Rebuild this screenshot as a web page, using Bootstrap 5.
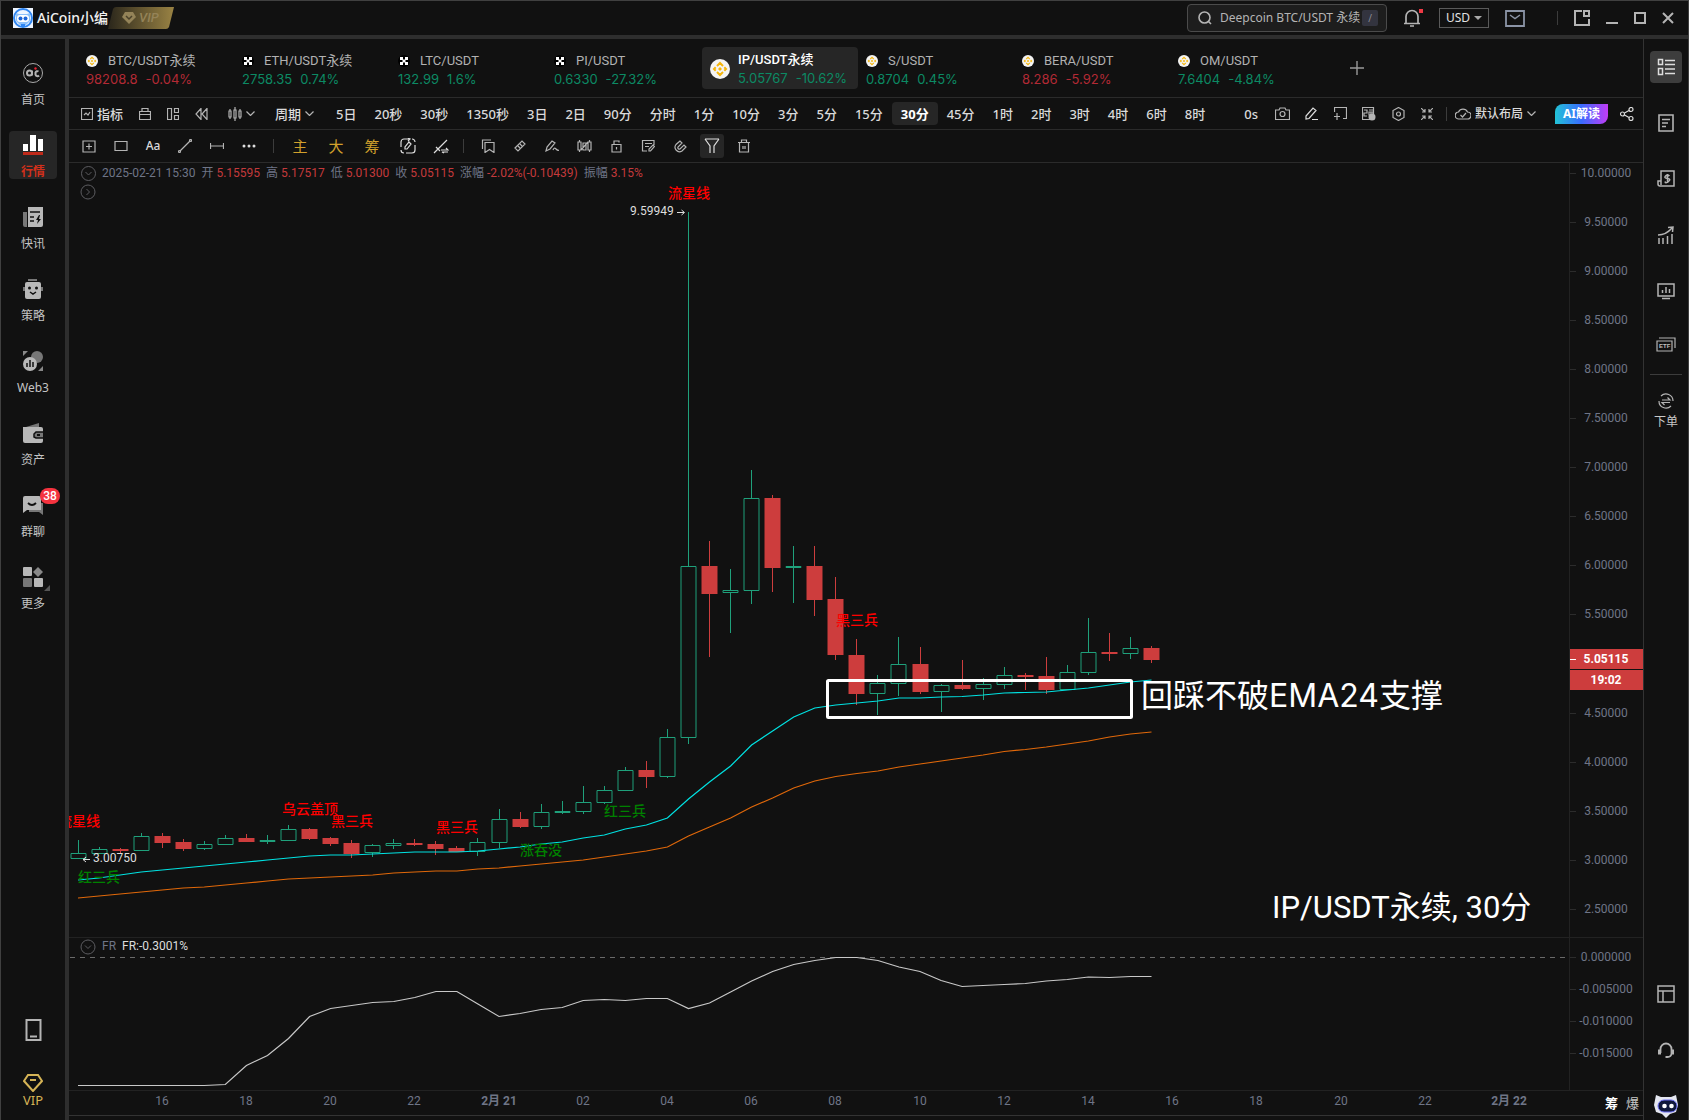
<!DOCTYPE html>
<html lang="zh-CN" data-bs-theme="dark">
<head>
<meta charset="utf-8">
<meta name="viewport" content="width=device-width, initial-scale=1">
<title>AiCoin - IP/USDT永续</title>
<link href="https://cdn.jsdelivr.net/npm/bootstrap@5.3.0/dist/css/bootstrap.min.css" rel="stylesheet">
<style>
:root{--ink:#111;--frame:#2e2e2e;--rule:#2b2b2b;--up:#0c8a64;--down:#b32a35;--muted:#6f7587}
body{background:var(--ink);color:#c8c8c8;font-family:"Noto Sans","Noto Sans CJK SC",sans-serif;font-size:13px;line-height:18px;overflow:hidden}
.app{border:1px solid #404040;border-bottom:0}
button,.plain{background:none;border:0;padding:0;color:inherit;font:inherit;text-decoration:none}
svg{display:block;flex:none}
.ic{fill:none;stroke:#b4b4b4;stroke-width:1.2}
.topbar{height:38px;border-bottom:4px solid var(--frame);padding-left:12px;padding-right:14px}
.brand-name{font-size:14px;font-weight:500;color:#f2f2f2}
.vip-tag{width:66px;height:22px}
.search-box{width:200px;height:28px;background:#1d1d1d;border:1px solid #4b4b4b;border-radius:4px;padding:0 8px 0 10px}
.search-box input{background:none;border:0;outline:0;min-width:0;flex:1;font-size:12px;color:#b4b4b4;padding:0}
.search-box input::placeholder{color:#b4b4b4;opacity:1}
.slash{width:16px;height:16px;background:#33343f;border-radius:2px;font-size:10px;line-height:16px;text-align:center;color:#8a8a92}
.cur{appearance:none;width:50px;height:20px;margin-left:14px;border:1px solid #5a5a5a;background:#111 url("data:image/svg+xml,%3Csvg xmlns='http://www.w3.org/2000/svg' width='8' height='4'%3E%3Cpath d='M0 0h8L4 4z' fill='%23aaa'/%3E%3C/svg%3E") no-repeat right 6px center;color:#e2e2e2;font-size:12px;line-height:16px;padding:0 0 0 6px}
.winsep{margin:0 16px 0 32px}
.leftbar{width:68px;border-right:4px solid var(--frame);padding-top:8px;background:var(--ink)}
.leftbar .side{height:72px;width:64px;font-size:12px;color:#c4c4c4;padding-top:16px;gap:8px;position:relative}
.side.on::before{content:"";position:absolute;inset:12px 8px;background:#262626;border-radius:4px;z-index:-1}
.side.on{color:#d2301b;font-weight:700;z-index:0}
.count{position:absolute;left:39px;top:9px;background:#f5333f;color:#fff;border-radius:8px;font:500 12px/16px Roboto,sans-serif;width:20px;text-align:center}
.corner-tri{position:absolute;left:43px;top:24px}
.vip-link{color:#d6b456;font-size:13px;line-height:16px}
.leftfoot{padding-bottom:12px}
.rightbar{width:45px;border-left:1px solid #333}
.rightbar .cell{height:56px;width:32px}
.rightbar .cell.last{height:28px;margin-top:14px}
.rightbar .cell.on::before{content:"";position:absolute;width:32px;height:32px;background:#3d3d3d;border-radius:4px;z-index:-1}
.railsep{width:32px;height:1px;margin:22px 0 18px;background:#3c3c3c}
.railetf{margin-top:18px}
.quotes{height:59px;border-bottom:1px solid var(--rule);padding-left:9px}
.quote{width:156px;padding:4px 8px 0;height:42px}
.quote.on{background:#262626;border-radius:4px;padding-top:2px}
.pair{font:400 13px/18px Roboto,"Noto Sans CJK SC",sans-serif;color:#b2b2b2}
.pair span{padding-left:10px}
.on .pair{color:#fff;font-weight:500}
.val{font:400 13px/18px Inter,"Noto Sans",sans-serif;gap:8px;white-space:nowrap}
.addtab{margin-left:24px}
.up{color:var(--up)}.down{color:var(--down)}
.tools{height:32px;border-bottom:1px solid var(--rule);white-space:nowrap;font-weight:500;color:#dadada}
.draw{height:33px;padding-left:4px}
.periods{padding-left:5px}
.period{padding:0 9px!important;height:23px;border-radius:4px}
.period.on{background:#262626;color:#fff;font-weight:700}
.t32{width:32px;height:24px}.t36{width:36px;height:24px}.t29{width:29px;height:24px}
.t32.on{position:relative;z-index:0}
.t32.on::before{content:"";position:absolute;inset:0 4px;background:#262626;border-radius:3px;z-index:-1}
.gold{color:#d2a02c;font-size:15px;font-weight:400}
.vr{width:1px;min-height:0;height:14px;align-self:center;background:#3c3c3c;opacity:1}
.layoutbtn{font-size:12px!important}
.clock{margin-right:10px}
.ai{width:53px;height:20px;margin-left:19px;border-radius:8px 0 8px 0;background:linear-gradient(90deg,#22c3d6,#3a6bff 50%,#c23cf5);color:#fff;font-size:12px;font-weight:700}
.sharebtn{padding:0 5px 0 12px}
.plotwrap{min-height:0}
.legendbar{position:absolute;left:12px;top:1px;gap:6px;font:400 12px/18px Roboto,"Noto Sans CJK SC",sans-serif;color:var(--muted);white-space:nowrap}
.legendbar b{font-weight:400;color:#c43a3c}
.axis{width:74px;border-left:1px solid #222}
.axisrow{height:26px;border-top:1px solid #222;border-bottom:1px solid #333}
svg text{font-family:Roboto,"Noto Sans CJK SC",sans-serif;font-size:12px}
.lab{fill:var(--muted)}
svg .note{font:400 32px Inter,"Noto Sans CJK SC",sans-serif;fill:#fff}
svg .mark-title{font:400 31px Roboto,"Noto Sans CJK SC",sans-serif;fill:#fff}
svg .pat{font:500 14px "Noto Sans CJK SC",sans-serif}
svg .etf{font:700 6px "Liberation Sans",sans-serif;fill:#c0c0c0;stroke:none}
.aa{font-size:12px}
.foot{height:4px}
</style>
<script src="https://cdn.jsdelivr.net/npm/bootstrap@5.3.0/dist/js/bootstrap.bundle.min.js"></script>
</head>
<body>
<div class="app vh-100 d-flex flex-column">
<header class="topbar d-flex align-items-center">
  <svg width="20" height="20" viewBox="0 0 20 20"><path fill="#eef5ff" d="M0 0h20v20H0z"/><circle cx="10" cy="10" r="9" fill="none" stroke="#2f86f2" stroke-width="2"/><path fill="#8cc0fa" d="M3 5l3 1h8l3-1v8l-4 4H7l-4-4z"/><rect x="4" y="7" width="12" height="7" rx="3" fill="#fff"/><circle cx="7.500" cy="10.500" r="2" fill="#1f66d8"/><circle cx="12.500" cy="10.500" r="2" fill="#1f66d8"/><path fill="#2f86f2" d="M8 16h4v3H8z"/></svg>
  <span class="brand-name ms-1">AiCoin小编</span>
  <svg class="vip-tag" viewBox="0 0 66 22" role="img" aria-label="VIP"><defs><linearGradient id="vg"><stop offset="0" stop-color="#2a261b"/><stop offset="1" stop-color="#9a8344"/></linearGradient></defs><path fill="url(#vg)" d="M5 2q1-2 3-2h58l-5 20q-1 2-3 2H0z"/><path fill="#948358" d="M17 5h8l3 5-7 7-7-7z"/><path d="M18 9l3 3 3-3" fill="none" stroke="#4a4129" stroke-width="1.500"/><text x="31" y="15" font-style="italic" font-weight="500" style="font-size:13px" fill="#948358">VIP</text></svg>
  <label class="search-box d-flex align-items-center ms-auto">
    <svg class="ic me-2" width="14" height="14" viewBox="0 0 14 14" style="stroke-width:1.600"><circle cx="6.500" cy="6.500" r="5.500"/><path d="M10.500 10.500l2.500 2.500"/></svg>
    <input type="text" aria-label="搜索" placeholder="Deepcoin BTC/USDT 永续"><span class="slash">/</span>
  </label>
  <button class="ms-3" aria-label="通知"><svg width="22" height="20" viewBox="0 0 22 20"><path d="M1 15.500h16M3 15V8.500a6 6 0 0 1 12 0V15M7 18h4" fill="none" stroke="#b4b4b4" stroke-width="1.700"/><path d="M16 1h4v4h-4z" fill="#f03a45"/></svg></button>
  <select class="cur" aria-label="货币"><option>USD</option></select>
  <button class="ms-3" aria-label="邮件"><svg width="20" height="17" viewBox="0 0 20 17" fill="none" stroke="#8b94a6"><path stroke-width="1.800" d="M1 1h18v15H1z"/><path stroke-width="1.500" d="M5 5l5 3.500L15 5"/></svg></button>
  <div class="vr winsep"></div>
  <div class="d-flex align-items-center gap-3">
  <button aria-label="弹出"><svg class="ic" width="16" height="16" viewBox="0 0 16 16"><path style="stroke-width:2" d="M8 1H1v14h14V9M10 1h5v5h-5z"/></svg></button>
  <button aria-label="最小化"><svg width="12" height="14"><path fill="#b4b4b4" d="M0 11h12v2H0z"/></svg></button>
  <button aria-label="最大化"><svg width="12" height="12"><path style="stroke-width:2" class="ic" d="M1 1h10v10H1z"/></svg></button>
  <button aria-label="关闭"><svg width="12" height="12"><path style="stroke-width:2" class="ic" d="M1 1l10 10M11 1L1 11"/></svg></button>
  </div>
</header>
<div class="d-flex flex-grow-1 plotwrap">
<nav class="leftbar d-flex flex-column">
  <a href="#" class="plain side d-flex flex-column align-items-center"><svg width="20" height="20" viewBox="0 0 20 20"><circle cx="10" cy="10" r="9.500" fill="none" stroke="#aaa"/><path fill="none" stroke="#b4b4b4" stroke-width="2" d="M9 7.500v5M9 10a2.500 2.500 0 1 0-5 0 2.500 2.500 0 1 0 5 0M15.500 8.500a2 2 0 0 0-3 1v2a2 2 0 0 0 3.500 1"/><circle cx="12.500" cy="5.500" r="1.200" fill="#e23"/></svg><span>首页</span></a>
  <a href="#" class="plain side on d-flex flex-column align-items-center"><svg width="20" height="20"><path fill="#fff" d="M0 9h5v7H0zM7 0h6v16H7zM15 4h5v12h-5z"/><path fill="#c02a1a" d="M0 17h20v3H0z"/></svg><span>行情</span></a>
  <a href="#" class="plain side d-flex flex-column align-items-center"><svg width="20" height="20"><path fill="#777" d="M0 5h4v15H2a2 2 0 0 1-2-2z"/><path fill="#b8b8b8" d="M5 0h15v18a2 2 0 0 1-2 2H5z"/><path stroke="#111" stroke-width="1.500" d="M7 5h10M7 10h4M7 14h4"/><path fill="#111" d="M16 8l-3 5h2l-1 4 4-5h-2l1-4z"/></svg><span>快讯</span></a>
  <a href="#" class="plain side d-flex flex-column align-items-center"><svg width="20" height="20"><path fill="#777" d="M5 0h9v2H5zM0 8h20v4H0z"/><rect x="2" y="3" width="16" height="17" rx="2" fill="#b8b8b8"/><circle cx="6.500" cy="9" r="1.500" fill="#111"/><circle cx="13.500" cy="9" r="1.500" fill="#111"/><path d="M7 13l3 2 3-2" fill="none" stroke="#111" stroke-width="1.500"/></svg><span>策略</span></a>
  <a href="#" class="plain side d-flex flex-column align-items-center"><svg width="20" height="20"><circle cx="14" cy="6" r="6" fill="#777"/><circle cx="7" cy="13" r="7" fill="#b8b8b8"/><path stroke="#111" stroke-width="1.500" d="M4 12v4M7 9v7M10 11v5"/><path fill="#888" d="M0 0h5L0 5zM20 15v5h-5z"/></svg><span>Web3</span></a>
  <a href="#" class="plain side d-flex flex-column align-items-center"><svg width="20" height="20"><path fill="#777" d="M3 4l13-4v4z"/><path fill="#b8b8b8" d="M0 4h18a2 2 0 0 1 2 2v12a2 2 0 0 1-2 2H2a2 2 0 0 1-2-2z"/><path fill="#777" stroke="#111" stroke-width="1.500" d="M20 9h-7l-2 2v3l2 1h7"/><path fill="#111" d="M14 11h3v2h-3z"/></svg><span>资产</span></a>
  <a href="#" class="plain side d-flex flex-column align-items-center"><svg width="20" height="20"><path fill="#777" d="M6 8h14v12l-4-3H6z"/><path fill="#b8b8b8" d="M0 3a2 2 0 0 1 2-2h14a2 2 0 0 1 2 2v12H4l-4 3z"/><path d="M5 8q4 4 8 0" fill="none" stroke="#111" stroke-width="1.800"/></svg><span class="count">38</span><span>群聊</span></a>
  <a href="#" class="plain side d-flex flex-column align-items-center"><svg width="20" height="20"><rect width="9" height="9" rx="1" fill="#b8b8b8"/><rect y="11" width="9" height="9" rx="1" fill="#777"/><rect x="11" y="11" width="9" height="9" rx="1" fill="#b8b8b8"/><path fill="#888" d="M15 0l5 5-5 5-5-5z"/></svg><svg class="corner-tri" width="6" height="16"><path fill="#555" d="M6 10v6H0z"/></svg><span>更多</span></a>
  <div class="leftfoot mt-auto d-flex flex-column align-items-center">
    <button aria-label="手机版"><svg width="17" height="22"><path style="stroke-width:2" class="ic" d="M1.500 1h14v20h-14zM5 17.500h7"/></svg></button>
    <a href="#" class="plain vip-link d-flex flex-column align-items-center mt-4 pt-2"><svg width="20" height="19" fill="none" stroke="#d6b456" stroke-width="2"><path d="M5 2h10l4 6-9 10L1 8zM7 7h6"/></svg><span>VIP</span></a>
  </div>
</nav>
<main class="flex-grow-1 d-flex flex-column overflow-hidden">
  <div class="quotes d-flex align-items-center" id="quotes"></div>
  <div class="tools d-flex align-items-center ps-2">
    <button class="d-flex align-items-center gap-1 ms-1"><svg class="ic" width="12" height="12"><path d="M.5.500h11v11H.5zM3 7l2-2 2 2 2-3"/></svg>指标</button>
    <button class="ms-3" aria-label="模板"><svg class="ic" width="12" height="12"><path d="M.5 3.500h11v8H.5zM3 3V.5h6V3M.5 6.500h11"/></svg></button>
    <button class="ms-3" aria-label="布局"><svg class="ic" width="12" height="12"><path d="M.5.500h4v11h-4zM7.500.500h4v4h-4zM7.500 7.500h4v4h-4z"/></svg></button>
    <button class="ms-3" aria-label="回放"><svg class="ic" width="13" height="12"><path d="M6 .5L1 6l5 5.500zM12 .5L7 6l5 5.500z"/></svg></button>
    <button class="d-flex align-items-center ms-3 ps-1" aria-label="K线样式"><svg class="ic" width="14" height="14"><path d="M1 4h2v6H1zM6 3h2v8H6zM11 4h2v6h-2zM2 2v2M2 10v2M7 0v3M7 11v3M12 2v2M12 10v2"/></svg><svg class="ic ms-1" width="9" height="5"><path d="M.5.500l4 4 4-4"/></svg></button>
    <button class="d-flex align-items-center gap-1 ms-3 me-2 ps-1">周期<svg class="ic" width="9" height="5"><path d="M.5.500l4 4 4-4"/></svg></button>
    <div class="periods d-flex align-items-center" id="periods"></div>
    <div class="d-flex align-items-center ms-auto">
      <span class="clock">0s</span>
      <button class="t29 d-flex align-items-center justify-content-center" aria-label="截图"><svg class="ic" width="15" height="13"><path d="M.5 3h3.500l1-2h5l1 2h3.500v9.500H.5z"/><circle cx="7.500" cy="7" r="2.500"/></svg></button>
      <button class="t29 d-flex align-items-center justify-content-center" aria-label="画线"><svg class="ic" width="13" height="13" style="stroke:#ddd"><path d="M1 12V9l7-8 3 2.500L4 11.500zM7 12.500h6"/></svg></button>
      <button class="t29 d-flex align-items-center justify-content-center" aria-label="新窗口"><svg class="ic" width="13" height="13"><path d="M.5 5V.5h12v11H9M3 6v7M0 9.500h6"/></svg></button>
      <button class="t29 d-flex align-items-center justify-content-center" aria-label="弹幕"><svg class="ic" width="14" height="14"><path d="M.5.500h11v12H.5zM2 3h3v3H2v3h3M7 3h4M7 5h4v3H7zM9 5v6"/><circle cx="10" cy="10" r="3.500" fill="#b4b4b4" stroke="none"/></svg></button>
      <button class="t29 d-flex align-items-center justify-content-center" aria-label="设置"><svg class="ic" width="13" height="14"><path d="M6.500.500l5.500 3v7l-5.500 3-5.500-3v-7z"/><circle cx="6.500" cy="7" r="2"/></svg></button>
      <button class="t29 d-flex align-items-center justify-content-center" aria-label="收起"><svg class="ic" width="12" height="12"><path d="M0 0l4 4M4 1v3H1M12 0L8 4M8 1v3h3M0 12l4-4M1 8h3v3M12 12L8 8M8 11V8h3"/></svg></button>
      <div class="vr ms-1 me-2"></div>
      <button class="layoutbtn d-flex align-items-center gap-1"><svg class="ic" width="16" height="13"><path d="M4 12a3.500 3.500 0 0 1-.5-7 5 5 0 0 1 9 0 3.500 3.500 0 0 1 0 7zM5.500 8l2 2 3.500-4"/></svg><span>默认布局</span><svg class="ic" width="9" height="5"><path d="M.5.500l4 4 4-4"/></svg></button>
      <button class="ai">AI解读</button>
      <button class="sharebtn me-1" aria-label="分享"><svg class="ic" width="14" height="14" style="stroke:#ddd"><circle cx="2.500" cy="7" r="2"/><circle cx="11" cy="2.500" r="2"/><circle cx="11" cy="11.500" r="2"/><path d="M4.500 6L9 3.500M4.500 8L9 10.500"/></svg></button>
    </div>
  </div>
  <div class="tools draw d-flex align-items-center" id="draw"></div>
  <div class="flex-grow-1 d-flex plotwrap">
    <div class="flex-grow-1 position-relative overflow-hidden">
      <svg id="plot" class="w-100 h-100" role="img" aria-label="IP/USDT永续 30分 K线图"></svg>
      <div class="legendbar d-flex">
        <button aria-label="收起指标"><svg width="15" height="15" fill="none" stroke="#5c5c60"><circle cx="7.500" cy="7.500" r="7"/><path d="M4.500 6l3 3 3-3"/></svg></button>
        <span>2025-02-21 15:30</span><span>开 <b>5.15595</b></span><span>高 <b>5.17517</b></span><span>低 <b>5.01300</b></span><span>收 <b>5.05115</b></span><span>涨幅 <b>-2.02%(-0.10439)</b></span><span>振幅 <b>3.15%</b></span>
      </div>
    </div>
    <div class="axis"><svg id="axis" class="w-100 h-100"></svg></div>
  </div>
  <div class="axisrow d-flex align-items-center">
    <svg id="time" class="flex-grow-1 h-100" style="width:0"></svg>
    <button class="me-2 fw-bold text-white">筹</button><button class="me-1">爆</button>
  </div>
  <div class="foot"></div>
</main>
<aside class="rightbar d-flex flex-column align-items-center" id="right"></aside>
</div>
</div>
<script>
const $=id=>document.getElementById(id);
/* quotes */
const bnb=s=>`<svg width="${s}" height="${s}" viewBox="0 0 20 20"><circle cx="10" cy="10" r="10" fill="#f4f4f4"/><path fill="none" stroke="#f5b60c" stroke-width="2" d="M7 7l3-3 3 3M7 13l3 3 3-3M5.700 8.300L4 10l1.700 1.700M14.300 8.300L16 10l-1.700 1.700"/><path fill="#f5b60c" d="M10 8l2 2-2 2-2-2z"/></svg>`;
const okx='<svg width="12" height="12"><circle cx="6" cy="6" r="6" fill="#000"/><path fill="#fff" d="M2 2h3v3H2zM7 2h3v3H7zM4.500 4.500h3v3h-3zM2 7h3v3H2zM7 7h3v3H7z"/></svg>';
$('quotes').innerHTML=[['b','BTC/USDT永续','98208.8','-0.04%','down'],['o','ETH/USDT永续','2758.35','0.74%','up'],['o','LTC/USDT','132.99','1.6%','up'],['o','PI/USDT','0.6330','-27.32%','up'],['x','IP/USDT永续','5.05767','-10.62%','up'],['b','S/USDT','0.8704','0.45%','up'],['b','BERA/USDT','8.286','-5.92%','down'],['b','OM/USDT','7.6404','-4.84%','up']].map(q=>{
 const v=`<div class="val d-flex ${q[4]}"><span>${q[2]}</span><span>${q[3]}</span></div>`;
 return q[0]=='x'?`<button class="quote on d-flex align-items-center gap-2">${bnb(20)}<div class="text-start"><div class="pair">${q[1]}</div>${v}</div></button>`
 :`<button class="quote text-start"><div class="d-flex align-items-center pair">${q[0]=='b'?bnb(12):okx}<span>${q[1]}</span></div>${v}</button>`}).join('')+'<button class="addtab" aria-label="添加"><svg width="14" height="14"><path d="M7 0v14M0 7h14" stroke="#999" stroke-width="1.400"/></svg></button>';
$('periods').innerHTML='5日 20秒 30秒 1350秒 3日 2日 90分 分时 1分 10分 3分 5分 15分 30分 45分 1时 2时 3时 4时 6时 8时'.split(' ').map(t=>`<button class="period${t=='30分'?' on':''}">${t}</button>`).join('');
/* drawing tools */
const cell=(w,p,on)=>`<button class="${w}${on?' on':''} d-flex align-items-center justify-content-center">${p}</button>`;
const ico=(d,x='')=>`<svg class="ic" width="14" height="14"><path d="${d}"/>${x}</svg>`;
$('draw').innerHTML=[
 ico('M1 2h12v11H1zM7 4.500v6M4 7.500h6'),ico('M1 2.500h12v9H1z'),'<span class="aa">Aa</span>',
 ico('M2 12L12 2','<circle cx="1.500" cy="12.500" r="1"/><circle cx="12.500" cy="1.500" r="1"/>'),ico('M0 7h14M.5 4v6M13.500 4v6'),
 '<svg width="14" height="4" fill="#ddd"><circle cx="2" cy="2" r="1.500"/><circle cx="7" cy="2" r="1.500"/><circle cx="12" cy="2" r="1.500"/></svg>'].map(p=>cell('t32',p)).join('')
 +'<div class="vr mx-2"></div>'
 +['主','大','筹'].map(t=>cell('t36 gold',t)).join('')
 +cell('t36','<svg class="ic" width="16" height="16" style="stroke:#ddd"><path d="M10 1H4a3 3 0 0 0-3 3v5M6 15h6a3 3 0 0 0 3-3V7M8 0l2 1-2 2M1 12a3 3 0 0 0 3 3M15 4a3 3 0 0 0-3-3M5 11V9l4-5 2 2-4 5z"/></svg>')
 +cell('t29','<svg class="ic" width="16" height="16" style="stroke:#ddd"><path d="M1 15L14 2M3 9l4 4M8 12h7l-2-2M15 14H9l2 1"/></svg>')
 +'<div class="vr mx-2"></div>'
 +[ico('M4 3.500h9v10l-4.500-3-4.500 3zM1.500 10V1H10'),ico('M2 9l7-7 3 3-7 7zM5 7l2 2M7 5l2 2'),ico('M1 12l1-4 5-6 3 2-5 6zM8 11q1-3 3-1t3 1'),
 '<svg class="ic" width="15" height="14"><path d="M1 3h3v8H1zM6 4h3v7H6zM11 3h3v8h-3zM2.500 1v2M2.500 11v2M12.500 1v2M12.500 11v2M4 11L11 3"/></svg>',
 ico('M3 5.500h9V13H3zM5 5V2h5v1.500M7.500 8v2.500'),ico('M13 6V1.500H1.500V12H6M4 4.500h7M4 7.500h4M8 12v-2l4-4 1.500 1.500-4 4.500z'),ico('M7 2L3 5.500a4.500 4.500 0 0 0 6 6.500L13 8l-2-2-4 4a1.500 1.500 0 0 1-2-2l4-4z')].map(p=>cell('t32',p)).join('')
 +cell('t32','<svg class="ic" width="16" height="16" style="stroke:#ddd"><path d="M1 1h14M1 1l5 7v7M15 1l-5 7v7"/></svg>',1)+cell('t32',ico('M1 3.500h12M4.500 3V1h5v2M2.500 4v9h9V4M6 7v3M8 7v3'));
/* right rail */
const r=(p,c='')=>`<button class="cell ${c} d-flex align-items-center justify-content-center position-relative z-0">${p}</button>`;
$('right').innerHTML=r('<svg class="ic" width="18" height="18" style="stroke:#ddd;stroke-width:1.500"><path d="M1.500 1.500h4v5h-4zM1.500 10.500h4v6h-4zM8 2.500h10M8 6.500h10M8 11h10M8 15.500h10"/></svg>','on')
+r('<svg class="ic" width="16" height="18" style="stroke-width:1.600"><path d="M1 1h14v16H1zM4 5.500h8M4 9h6M4 12.500h4"/></svg>')
+r('<svg class="ic" width="18" height="18" style="stroke-width:1.500"><path d="M4 11V1h13v15H3a2 2 0 0 1-2-2v-3h3v4M12.500 6q-2-2-4 0t2 2.500 1 3-3.500 0M10.500 4v9"/></svg>')
+r('<svg class="ic" width="18" height="18" style="stroke-width:1.500"><path d="M1 9q8 0 14-7M11 1.500l5-.5-.5 5M2 12v6M6 12v6M10.500 10v8M15 8v10" /></svg>')
+r('<svg class="ic" width="18" height="18" style="stroke-width:1.500"><path d="M1 2h16v12H1zM5 16.500h8M5.500 8v3M9 5v6M12.500 7v4"/></svg>')
+'<svg class="ic railetf" width="20" height="15"><path d="M1 4h15v10H1zM3 1h16v10"/><text x="3" y="11" class="etf">ETF</text></svg><div class="railsep"></div>'
+'<button class="d-flex flex-column align-items-center" style="font-size:12px"><svg class="ic mb-1" width="16" height="16"><path d="M3 3a7 7 0 0 1 12 5M13 13A7 7 0 0 1 1 8M4 7h8L9.500 4.500M12 9.500H4L6.500 12"/></svg>下单</button>'
+'<div class="mt-auto"></div>'+r('<svg class="ic" width="18" height="18" style="stroke-width:1.500"><path d="M1 1h16v16H1zM1 6h16M6 6v11"/></svg>')
+r('<svg class="ic" width="18" height="18" style="stroke-width:1.800"><path d="M3.500 12V8a5.500 5.500 0 0 1 11 0v4.500a4 4 0 0 1-4 3.500H8.500"/><path d="M2.500 8.500v5M15.500 8.500v5" style="stroke-width:3"/></svg>')
+r('<svg width="24" height="24"><path fill="#e4e6f0" d="M2 1l5 2h10l5-2 2 10-2 7-6 2-4 4-4-4-6-2-2-7z"/><rect x="4" y="6" width="19" height="12" rx="6" fill="#10183c" stroke="#6a6cf0"/><circle cx="10.500" cy="12" r="2.300" fill="#fff"/><circle cx="17.500" cy="12" r="2.300" fill="#fff"/></svg>','last');

/* candles: [up?, top of body, bottom of body, high, low] */
const X=i=>78+21.05*i;
const C=[[1,853,859,840,859],[1,849,854,847,854],[0,849,851,848,854],[1,836,851,833,851],[0,836,843,833,848],[0,842,849,839,851],[1,844,849,841,850],[1,838,845,835,845],[0,838,842,834,842],[1,840,842,835,844],[1,829,841,825,841],[0,829,839,828,840],[0,838,844,837,846],[0,843,854,840,858],[1,845,853,844,857],[1,843,846,839,849],[0,843,845,839,846],[0,844,849,841,855],[0,848,852,846,852],[1,842,852,838,856],[1,819,843,809,848],[0,819,827,812,828],[1,812,827,804,829],[1,811,813,801,814],[1,802,812,786,814],[1,790,803,786,804],[1,770,791,767,791],[0,770,777,761,788],[1,737,777,729,778],[1,566,738,212,744],[0,566,594,541,657],[1,590,593,569,633],[1,498,591,470,604],[0,498,568,495,592],[1,566,568,546,603],[0,566,600,546,616],[0,599,655,577,660],[0,655,694,639,705],[1,683,694,675,715],[1,664,684,637,696],[0,664,692,647,694],[1,685,692,684,712],[0,685,689,660,690],[1,684,689,678,700],[1,675,685,667,689],[0,675,677,673,690],[0,676,690,657,694],[1,672,690,665,690],[1,652,673,618,675],[0,652,654,633,661],[1,648,654,637,659],[0,648,660,646,663]];
let s=C.map((c,i)=>{const x=Math.round(X(i)-.5)+.5,[u,a,b,h,l]=c,k=u?'#1fa07b':'#cd3d3d';
 return `<path d="M${x} ${h}V${a}M${x} ${b}V${l}" stroke="${k}"/>`+(u?`<path d="M${x-7.5} ${a+.5}h15v${Math.max(b-a-1,1)}h-15z" fill="none" stroke="${k}"/>`:`<path d="M${x-8} ${a}h16v${b-a}h-16z" fill="${k}"/>`)}).join('');
const line=(v,c)=>`<polyline fill="none" stroke="${c}" stroke-width="1.2" points="${v.map((y,i)=>X(i).toFixed(1)+','+y).join(' ')}"/>`;
s+=line([880,878,875,872,870,868,866,864,862,860,858,856,855,855,854,853,852,852,852,851,849,847,844,842,838,835,829,825,818,799,782,766,745,731,717,708,705,703,701,698,698,697,696.5,695,693,692.5,692,690,688,685,682,680],'#00e2e2');
s+=line([898,896,894,892,890,888,887,885,883,881,879,878,877,876,875,873,872,871,871,869,868,866,864,862,860,857,854,851,847,836,827,818,807,798,788,781,776.5,773.5,771,767,764,761,758,755,751.5,749.5,747,744,741,737,734,732],'#e0680a');
const fr=[1085.5,1085.5,1085.5,1085.5,1085.5,1085.5,1085.5,1084.5,1065.5,1055.5,1038.5,1016.5,1008.5,1005.5,1002.5,1001.5,997.5,991.5,991.5,1004,1016.5,1013.5,1009.5,1007.5,1000.5,999.5,1000.5,998.5,998.5,1008.5,1003,992,981,971.5,964.5,960.5,957.5,957.5,960.5,967,971.5,980.5,986.5,985.5,984.5,983.5,981,979.5,977,977.5,976.5,976.5];
s+='<path d="M69 937.500h1600" stroke="#222"/><path d="M70 957.500h1496" stroke="#6a6a6a" stroke-dasharray="5 5"/>'+line(fr,'#c8c8c8');
s+='<rect x="827.500" y="680.500" width="304" height="37" rx="1" fill="none" stroke="#fff" stroke-width="3"/>';
[['流星线',689,198],['流星线',79,826],['乌云盖顶',310,814],['黑三兵',352,826],['黑三兵',457,832],['黑三兵',857,625],['红三兵',99,882,1],['涨吞没',541,855,1],['红三兵',625,816,1]].forEach(p=>s+=`<text class="pat" text-anchor="middle" x="${p[1]}" y="${p[2]}" fill="${p[3]?'#008000':'#f00'}">${p[0]}</text>`);
s+='<text x="630" y="215" fill="#ddd">9.59949</text><path d="M677 212.500h7M681.500 210l3 2.500-3 2.500" fill="none" stroke="#ddd"/><text x="93" y="862" fill="#ddd">3.00750</text><path d="M90 859.500h-7M86 857l-3 2.500 3 2.500" fill="none" stroke="#ddd"/>';
s+='<text class="note" x="1141" y="707">回踩不破EMA24支撑</text><text class="mark-title" x="1272" y="918">IP/USDT永续, 30分</text>';
s+='<g fill="none" stroke="#5c5c60"><circle cx="88" cy="192" r="7"/><path d="M86.500 189l3 3-3 3"/><circle cx="88" cy="947" r="7"/><path d="M85 945.500l3 3 3-3"/></g><text class="lab" x="102" y="950">FR</text><text x="122" y="950" fill="#ddd">FR:-0.3001%</text>';
$('plot').innerHTML=`<g transform="translate(-69,-163)">${s}</g>`;
/* price axis */
let a='';const tick=(y,t)=>a+=`<path d="M0 ${y}.500h6" stroke="#2c2c2c"/><text class="lab" text-anchor="middle" x="36" y="${y+4}">${t}</text>`;
for(let i=0;i<16;i++)if(i!=10)tick(Math.round(173+49.05*i),(10-i/2).toFixed(5));
[0,5,10,15].forEach((v,i)=>tick(957+32*i,v?'-0.0'+String(v).padStart(2,'0')+'000':'0.000000'));
a+='<path d="M0 937.500h80" stroke="#222"/><path fill="#cd3d3d" d="M-1 649h75v20H-1zM-1 670h75v20H-1z"/><path d="M0 659.500h6" stroke="#fff"/><g fill="#fff" font-weight="700" text-anchor="middle"><text x="36" y="663">5.05115</text><text x="36" y="684">19:02</text></g>';
$('axis').innerHTML=`<g transform="translate(0,-163)">${a}</g>`;
$('time').innerHTML=['16','18','20','22','2月 21','02','04','06','08','10','12','14','16','18','20','22','2月 22'].map((t,i)=>`<text class="lab" text-anchor="middle" x="${Math.round(X(4+4*i)-69.5)}" y="14" ${t[1]=='月'?'font-weight="700"':''}>${t}</text>`).join('');
</script>
</body>
</html>
